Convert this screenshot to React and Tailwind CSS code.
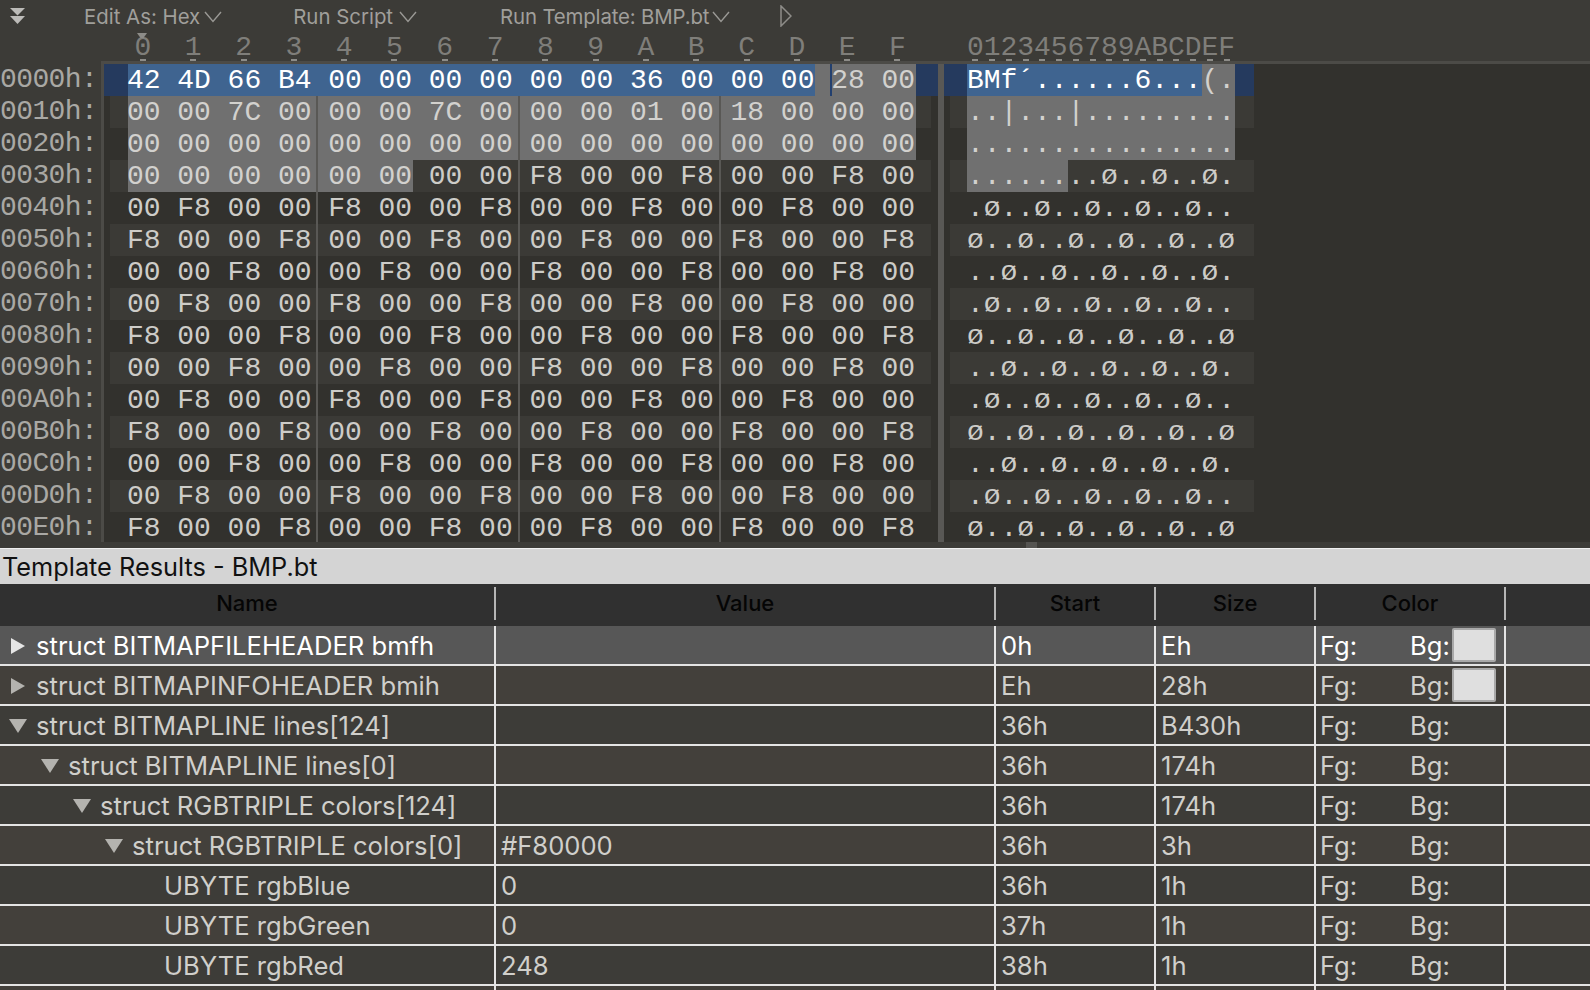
const MONO = "font-['Liberation_Mono',monospace]"
const SANS = "font-['Inter',sans-serif]"

// first bytes of the file, then 00 00 F8 repeating pixel data
const HEAD = [
  0x42, 0x4d, 0x66, 0xb4, 0, 0, 0, 0, 0, 0, 0x36, 0, 0, 0, 0x28, 0,
  0, 0, 0x7c, 0, 0, 0, 0x7c, 0, 0, 0, 1, 0, 0x18, 0, 0, 0,
  0, 0, 0, 0, 0, 0, 0, 0, 0, 0, 0, 0, 0, 0, 0, 0,
  0, 0, 0, 0, 0, 0,
]
const SELECTED = HEAD.length
const BLUE_END = 14

function byteAt(i) {
  if (i < HEAD.length) return HEAD[i]
  return (i - HEAD.length) % 3 === 2 ? 0xf8 : 0
}

function hex(v) {
  return v.toString(16).toUpperCase().padStart(2, '0')
}

function ascii(v) {
  if (v === 0x42) return 'B'
  if (v === 0x4d) return 'M'
  if (v === 0x66) return 'f'
  if (v === 0xb4) return '´'
  if (v === 0x36) return '6'
  if (v === 0x28) return '('
  if (v === 0x7c) return '|'
  if (v === 0xf8) return 'ø'
  return '.'
}

function cellTone(i) {
  if (i < BLUE_END) return 'bg-[#3f6490] text-white'
  if (i < SELECTED) return 'bg-[#707070] text-[#d2d1ce]'
  return 'text-[#cdccc8]'
}

function gapTone(i) {
  if (i + 1 < BLUE_END) return 'bg-[#3f6490]'
  if (i + 1 < SELECTED) return 'bg-[#707070]'
  return ''
}

function HexCell({ offset, col, row }) {
  const i = offset + col
  const showSep = row > 0 && (col === 3 || col === 7 || col === 11)
  return (
    <div className="flex h-full">
      <div className={`relative w-[33.5px] h-full flex items-center pt-[2px] whitespace-pre ${cellTone(i)}`}>
        {i === 14 && <div className="absolute left-[-2px] top-0 bottom-0 w-[2px] bg-[#23406f]" />}
        <span className="-ml-[1px]">{hex(byteAt(i))}</span>
      </div>
      {col < 15 && (
        <div className={`w-[16.8px] h-full pl-[4px] ${gapTone(i)}`}>
          {showSep && <div className="w-[2px] h-full bg-[#595855]" />}
        </div>
      )}
    </div>
  )
}

function AsciiCell({ i }) {
  return (
    <span className={`w-[16.75px] h-full flex items-center justify-center pt-[2px] ${cellTone(i)}`}>
      {ascii(byteAt(i))}
    </span>
  )
}

function HexRow({ row }) {
  const offset = row * 16
  const isFirst = row === 0
  const striped = row % 2 === 1
  const cols = Array.from({ length: 16 }, (_, c) => c)
  const addr = offset.toString(16).toUpperCase().padStart(4, '0') + 'h:'

  return (
    <div className={`flex h-8 shrink-0 text-[28px] leading-[26px] ${MONO}`}>
      <div className="w-[101px] shrink-0 flex items-center text-[#a9a8a4] tracking-[-0.6px] bg-[#3c3b37] whitespace-pre">{addr}</div>
      <div className="w-[3px] shrink-0 bg-[#4c4b47]" />
      {isFirst ? (
        <div className="w-[834px] shrink-0 pl-[24px] flex bg-[#253a5e]">
          {cols.map(c => <HexCell key={c} offset={offset} col={c} row={row} />)}
        </div>
      ) : (
        <div className="w-[834px] shrink-0 pl-[6px]">
          <div className={`w-[821px] h-full pl-[18px] flex ${striped ? 'bg-[#3b3a36]' : ''}`}>
            {cols.map(c => <HexCell key={c} offset={offset} col={c} row={row} />)}
          </div>
        </div>
      )}
      <div className="w-[6px] shrink-0 bg-[#595855]" />
      {isFirst ? (
        <div className="w-[310px] shrink-0 pl-[23px] flex bg-[#253a5e]">
          {cols.map(c => <AsciiCell key={c} i={offset + c} />)}
        </div>
      ) : (
        <div className="pl-[6px]">
          <div className={`w-[304px] h-full pl-[17px] flex ${striped ? 'bg-[#3b3a36]' : ''}`}>
            {cols.map(c => <AsciiCell key={c} i={offset + c} />)}
          </div>
        </div>
      )}
    </div>
  )
}

function RulerDigit({ ch }) {
  return (
    <div className="w-[16.75px] h-full flex flex-col items-center shrink-0">
      <span className="leading-[22px] mt-[7px]">{ch}</span>
      <span className="w-[6px] h-[2px] bg-[#8d8c88]" />
    </div>
  )
}

function Ruler() {
  const digits = '0123456789ABCDEF'.split('')
  return (
    <div className={`flex h-[31px] shrink-0 text-[28px] text-[#7f7e7a] ${MONO}`}>
      <div className="w-[134.6px] shrink-0" />
      <div className="w-[832.4px] shrink-0 flex">
        {digits.map(d => (
          <div key={d} className="w-[50.3px] shrink-0">
            <RulerDigit ch={d} />
          </div>
        ))}
      </div>
      <div className="flex">
        {digits.map(d => <RulerDigit key={d} ch={d} />)}
      </div>
    </div>
  )
}

function Marker() {
  return (
    <svg width="10" height="5" viewBox="0 0 10 5">
      <polygon points="0,0 10,0 6.5,5 3.5,5" fill="#8d8c88" />
    </svg>
  )
}

function Chevron({ className }) {
  return (
    <svg className={`shrink-0 ${className}`} width="18" height="12" viewBox="0 0 18 12">
      <polyline points="1,1 9,10.5 17,1" fill="none" stroke="#9a9995" strokeWidth="1.4" />
    </svg>
  )
}

function Toolbar() {
  return (
    <div className={`flex items-center h-[30px] shrink-0 text-[20.4px] text-[#a09f9b] pt-[5px] ${SANS}`}>
      <svg className="ml-[10px] -mt-[3px] shrink-0" width="15" height="16" viewBox="0 0 15 16">
        <polygon points="0,0 15,0 7.5,7.5" fill="#bcbbb8" />
        <polygon points="0,8 15,8 7.5,16" fill="#bcbbb8" />
      </svg>
      <span className="ml-[59px]">Edit As: Hex</span>
      <Chevron className="ml-[4px] -mt-[2px]" />
      <span className="ml-[71px]">Run Script</span>
      <Chevron className="ml-[6px] -mt-[2px]" />
      <span className="ml-[83px] tracking-[-0.15px]">Run Template: BMP.bt</span>
      <Chevron className="ml-[3px] -mt-[2px]" />
      <svg className="ml-[50px] -mt-[3px] shrink-0" width="12" height="22" viewBox="0 0 12 22">
        <polygon points="1,1 11,11 1,21" fill="none" stroke="#8e8d89" strokeWidth="1.5" />
      </svg>
    </div>
  )
}

function Triangle({ open, selected }) {
  const fill = selected ? '#e6e6e6' : '#b4b3af'
  return open ? (
    <svg className="shrink-0 -mt-[1px]" width="18" height="14" viewBox="0 0 18 14">
      <polygon points="0,0 18,0 9,14" fill={fill} />
    </svg>
  ) : (
    <svg className="shrink-0 -mt-[1px]" width="14" height="16" viewBox="0 0 14 16">
      <polygon points="0,0 14,8 0,16" fill={fill} />
    </svg>
  )
}

const ROWS = [
  { name: 'struct BITMAPFILEHEADER bmfh', depth: 0, arrow: 'closed', start: '0h', size: 'Eh', swatch: true, selected: true },
  { name: 'struct BITMAPINFOHEADER bmih', depth: 0, arrow: 'closed', start: 'Eh', size: '28h', swatch: true },
  { name: 'struct BITMAPLINE lines[124]', depth: 0, arrow: 'open', start: '36h', size: 'B430h' },
  { name: 'struct BITMAPLINE lines[0]', depth: 1, arrow: 'open', start: '36h', size: '174h' },
  { name: 'struct RGBTRIPLE colors[124]', depth: 2, arrow: 'open', start: '36h', size: '174h' },
  { name: 'struct RGBTRIPLE colors[0]', depth: 3, arrow: 'open', value: '#F80000', start: '36h', size: '3h' },
  { name: 'UBYTE rgbBlue', depth: 4, value: '0', start: '36h', size: '1h' },
  { name: 'UBYTE rgbGreen', depth: 4, value: '0', start: '37h', size: '1h' },
  { name: 'UBYTE rgbRed', depth: 4, value: '248', start: '38h', size: '1h' },
]

const GRID = 'grid grid-cols-[496px_500px_160px_160px_190px_1fr]'

function TreeRow({ row, index }) {
  const tone = row.selected
    ? 'bg-[#575757] text-white'
    : index % 2 === 1
      ? 'bg-[#43403b] text-[#d0cfcb]'
      : 'bg-[#3d3c38] text-[#d0cfcb]'
  const cell = 'border-r-2 border-[#e4e4e4] h-full flex items-center pl-[5px] pt-[1px] whitespace-pre'

  return (
    <div className={`${GRID} h-[40px] shrink-0 border-b-2 border-[#e4e4e4] text-[25.6px] ${tone}`}>
      <div className={`${cell} !pl-0`}>
        {/* 32px indent per tree level */}
        <div className="flex items-center justify-center w-[36px] shrink-0" style={{ marginLeft: row.depth * 32 }}>
          {row.arrow && <Triangle open={row.arrow === 'open'} selected={row.selected} />}
        </div>
        {row.name}
      </div>
      <div className={cell}>{row.value}</div>
      <div className={cell}>{row.start}</div>
      <div className={cell}>{row.size}</div>
      <div className={`${cell} !pl-[4px]`}>
        {row.name && <span className="w-[90px] shrink-0">Fg:</span>}
        {row.name && <span>Bg:</span>}
        {row.swatch && <span className="ml-[2px] -mt-[3px] w-[44px] h-[34px] bg-[#dfdfdf] border-2 border-[#a9a9a9] rounded-[2px]" />}
      </div>
      <div />
    </div>
  )
}

function ColumnHeader() {
  const heads = ['Name', 'Value', 'Start', 'Size', 'Color']
  return (
    <div className={`${GRID} h-[42px] shrink-0 bg-[#303030] text-[22px] font-medium text-[#050505] pt-[3px] pb-[6px]`}>
      {heads.map(h => (
        <div key={h} className="border-r-2 border-[#b5b5b5] h-full flex items-center justify-center">{h}</div>
      ))}
      <div />
    </div>
  )
}

export default function App() {
  const rows = Array.from({ length: 15 }, (_, r) => r)

  return (
    <div className={`w-[1590px] h-[990px] overflow-hidden flex flex-col bg-[#32312d] ${SANS}`}>
      <div className="bg-[#3c3b37] shrink-0">
        <Toolbar />
        <div className="relative">
          <Ruler />
          <div className="absolute left-[137px] top-[3px] leading-none"><Marker /></div>
        </div>
        <div className="ml-[101px] h-[3px] bg-[#4c4b47]" />
      </div>

      {/* last row runs 2px under the splitter strip */}
      <div className="h-[478px] shrink-0 bg-[#32312d]">
        {rows.map(r => <HexRow key={r} row={r} />)}
      </div>

      {/* splitter strip */}
      <div className="relative h-[6px] shrink-0 bg-[#3c3b37] pl-[1026px]">
        <div className="w-[11px] h-full bg-[#555451]" />
      </div>

      <div className="h-[36px] shrink-0 bg-[#d4d4d4] border-t border-[#efefef] pl-[2px] flex items-center text-[25.3px] text-[#111]">
        Template Results - BMP.bt
      </div>

      <ColumnHeader />

      {ROWS.map((row, i) => <TreeRow key={row.name} row={row} index={i} />)}
      <TreeRow row={{ name: '', depth: 0 }} index={9} />
    </div>
  )
}
